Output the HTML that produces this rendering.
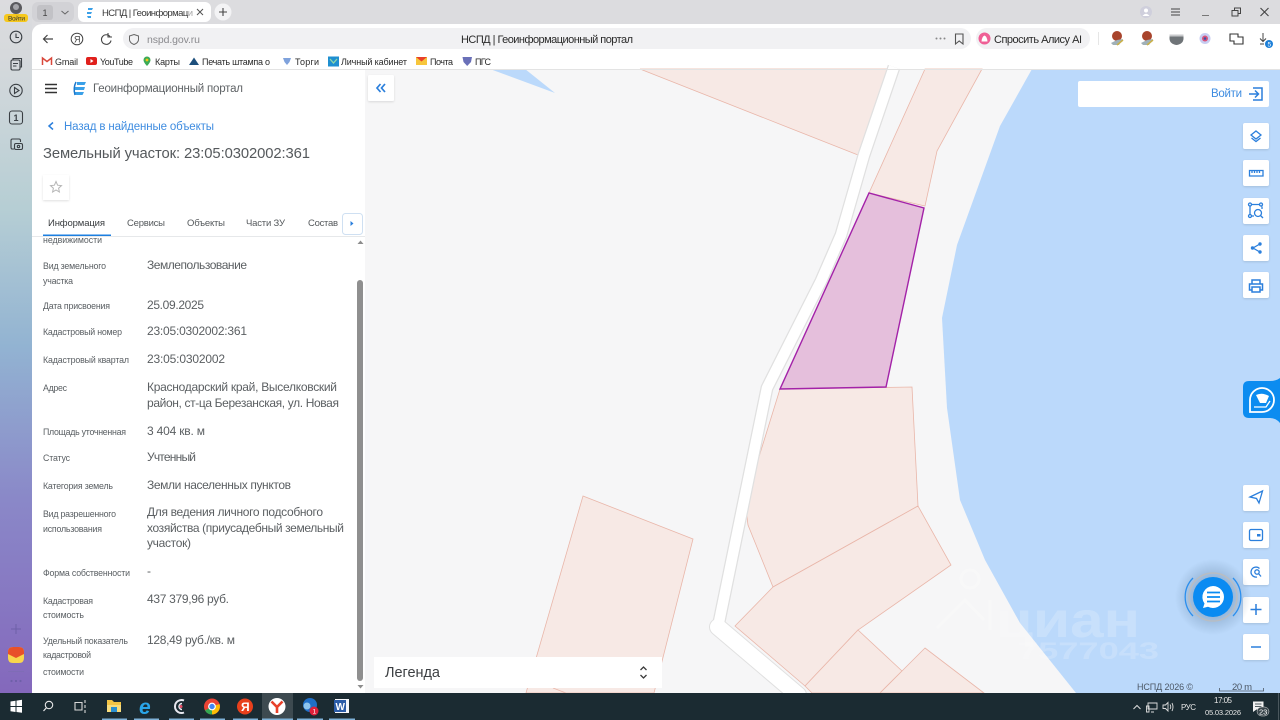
<!DOCTYPE html>
<html lang="ru">
<head>
<meta charset="utf-8">
<title>НСПД | Геоинформационный портал</title>
<style>
html,body{margin:0;padding:0;width:1280px;height:720px;overflow:hidden;background:#fff}
svg{display:block;font-family:"Liberation Sans",sans-serif}
.l{font-size:8.800px;fill:#5a5f63}
.v{font-size:12px;fill:#5b5f62}
.t{font-size:9.500px;fill:#55595c}
.bm{font-size:9px;fill:#2a2a2a}
.p{fill:#f7e9e5;stroke:#e9b6a9;stroke-width:.8}
.ic{fill:none;stroke:#2b7fdc;stroke-width:1.3}
.si{fill:none;stroke:#3a3f44;stroke-width:1.1}
</style>
</head>
<body>
<svg width="1280" height="720" viewBox="0 0 1280 720" xmlns="http://www.w3.org/2000/svg">
<defs>
<linearGradient id="side" x1="0" y1="0" x2="0" y2="1">
<stop offset="0" stop-color="#dcdcdf"/><stop offset=".08" stop-color="#d6d9dc"/><stop offset=".3" stop-color="#b6ced4"/><stop offset=".5" stop-color="#92b3d2"/><stop offset=".72" stop-color="#8a88c8"/><stop offset="1" stop-color="#8468bc"/>
</linearGradient>
<filter id="sh" x="-20%" y="-20%" width="140%" height="140%"><feDropShadow dx="0" dy="1" stdDeviation="1" flood-color="#000" flood-opacity=".12"/></filter>
<radialGradient id="glow"><stop offset=".45" stop-color="#4a6a8a" stop-opacity=".35"/><stop offset="1" stop-color="#4a6a8a" stop-opacity="0"/></radialGradient>
</defs>

<!-- window chrome -->
<rect width="1280" height="720" fill="#dcdcdf"/>
<rect x="0" y="0" width="32" height="693" fill="url(#side)"/>
<path d="M32 34a10 10 0 0 1 10-10H1280V70H32Z" fill="#fff"/>

<!-- map -->
<rect x="365" y="69" width="915" height="624" fill="#f6f6f7"/>
<path d="M1032 69L1000 126L957 245L942 318L947 408L960 500L985 560L1020 623L1076 693H1280V69Z" fill="#bbd9fb"/>
<path d="M490 69L555 93L525 69Z" fill="#bbd9fb"/>
<polygon class="p" points="640,69 858,155 889,69"/>
<polygon class="p" points="925,69 982,69 937,151 925,206 869,193"/>
<polygon class="p" points="780,389 912,387 918,506 773,587 748,525 745,502"/>
<g fill="none" stroke-linejoin="round">
<path d="M894 67L864 155L841 235L821 281L767 388L718 627" stroke="#e0e0e0" stroke-width="13"/>
<path d="M718 627L798 695" stroke="#e0e0e0" stroke-width="18" stroke-linecap="round"/>
<path d="M894 67L864 155L841 235L821 281L767 388L718 627" stroke="#fff" stroke-width="10.500"/>
<path d="M718 627L798 695" stroke="#fff" stroke-width="16" stroke-linecap="round"/>
</g>
<polygon class="p" points="773,587 918,506 951,565 858,630 805,686 735,626"/>
<polygon class="p" points="858,630 902,671 880,693 812,693 805,686"/>
<polygon class="p" points="925,648 984,693 880,693 902,671"/>
<polygon class="p" points="583,496 693,539 654,693 526,693"/>
<path d="M553 688L566 693" stroke="#e9b6a9" stroke-width=".8" fill="none"/>
<polygon points="780,389 869,193 924,208 886,387" fill="#e5bfdc" stroke="#a322a8" stroke-width="1.400"/>

<!-- watermark -->
<g opacity=".22" fill="none" stroke="#fff" stroke-width="3">
<circle cx="970" cy="579" r="9"/>
<path d="M937 628L965 600L984 620M990 630V600"/>
</g>
<text x="996" y="637" font-size="50" font-weight="bold" fill="#fff" opacity=".2" textLength="144" lengthAdjust="spacingAndGlyphs">циан</text>
<text x="1018" y="659" font-size="24" font-weight="bold" fill="#fff" opacity=".18" textLength="141" lengthAdjust="spacingAndGlyphs">7577043</text>

<!-- left panel -->
<rect x="32" y="69" width="333" height="624" fill="#fff"/>
<line x1="32" y1="69.500" x2="1280" y2="69.500" stroke="#e3e3e3"/>

<path d="M45 84.500H57M45 88.500H57M45 92.500H57" stroke="#333" stroke-width="1.400"/>
<path d="M77 82H86L84.500 85H77ZM75 87H85L84 90H75ZM75 92H84L82.500 95H77Q74 95 74 92Z" fill="#3aa0e8"/>
<path d="M76 82Q73 88 75 95" stroke="#1c78cc" stroke-width="1.500" fill="none"/>
<text x="93" y="92" font-size="11.500" fill="#5f6366" textLength="150">Геоинформационный портал</text>

<path d="M53 122.500L49 126L53 129.500" fill="none" stroke="#2b7fdc" stroke-width="1.500"/>
<text x="64" y="130" font-size="11.500" fill="#3e8ce0" textLength="150">Назад в найденные объекты</text>
<text x="43" y="158" font-size="14.800" fill="#55595c" textLength="267">Земельный участок: 23:05:0302002:361</text>

<rect x="43" y="175" width="26" height="25" fill="#fff" filter="url(#sh)"/>
<path d="M56 181.500L57.600 185.200L61.500 185.600L58.600 188.200L59.400 192L56 190L52.600 192L53.400 188.200L50.500 185.600L54.400 185.200Z" fill="none" stroke="#b5b5b5"/>

<text x="48" y="226" class="t" style="fill:#3a3d40" textLength="57">Информация</text>
<text x="127" y="226" class="t" textLength="38">Сервисы</text>
<text x="187" y="226" class="t" textLength="38">Объекты</text>
<text x="246" y="226" class="t" textLength="39">Части ЗУ</text>
<text x="308" y="226" class="t" textLength="30">Состав</text>
<rect x="32" y="236" width="333" height="1" fill="#e6e8ea"/>
<rect x="43" y="234.500" width="68" height="1.500" fill="#1c7fe0"/>
<rect x="342.500" y="213.500" width="20" height="21" rx="3" fill="#fff" stroke="#cfe0f2"/>
<path d="M350.500 221L353.500 223.500L350.500 226Z" fill="#2b7fdc"/>

<g class="labels">
<text x="43" y="243" class="l" textLength="59">недвижимости</text>
<text x="43" y="269" class="l" textLength="63">Вид земельного</text>
<text x="43" y="284" class="l" textLength="30">участка</text>
<text x="43" y="309" class="l" textLength="67">Дата присвоения</text>
<text x="43" y="335" class="l" textLength="79">Кадастровый номер</text>
<text x="43" y="363" class="l" textLength="86">Кадастровый квартал</text>
<text x="43" y="391" class="l" textLength="24">Адрес</text>
<text x="43" y="435" class="l" textLength="83">Площадь уточненная</text>
<text x="43" y="461" class="l" textLength="27">Статус</text>
<text x="43" y="489" class="l" textLength="70">Категория земель</text>
<text x="43" y="517" class="l" textLength="73">Вид разрешенного</text>
<text x="43" y="532" class="l" textLength="59">использования</text>
<text x="43" y="576" class="l" textLength="87">Форма собственности</text>
<text x="43" y="604" class="l" textLength="50">Кадастровая</text>
<text x="43" y="618" class="l" textLength="41">стоимость</text>
<text x="43" y="644" class="l" textLength="85">Удельный показатель</text>
<text x="43" y="658" class="l" textLength="48">кадастровой</text>
<text x="43" y="675" class="l" textLength="41">стоимости</text>
</g>
<g class="values">
<text x="147" y="269" class="v" textLength="100">Землепользование</text>
<text x="147" y="309" class="v" textLength="57">25.09.2025</text>
<text x="147" y="335" class="v" textLength="100">23:05:0302002:361</text>
<text x="147" y="363" class="v" textLength="78">23:05:0302002</text>
<text x="147" y="391" class="v" textLength="190">Краснодарский край, Выселковский</text>
<text x="147" y="407" class="v" textLength="192">район, ст-ца Березанская, ул. Новая</text>
<text x="147" y="435" class="v" textLength="58">3 404 кв. м</text>
<text x="147" y="461" class="v" textLength="49">Учтенный</text>
<text x="147" y="489" class="v" textLength="144">Земли населенных пунктов</text>
<text x="147" y="516" class="v" textLength="176">Для ведения личного подсобного</text>
<text x="147" y="532" class="v" textLength="197">хозяйства (приусадебный земельный</text>
<text x="147" y="547" class="v" textLength="44">участок)</text>
<text x="147" y="575" class="v">-</text>
<text x="147" y="603" class="v" textLength="82">437 379,96 руб.</text>
<text x="147" y="644" class="v" textLength="88">128,49 руб./кв. м</text>
</g>
<!-- scrollbar -->
<path d="M357.500 244L360.500 240.500L363.500 244Z" fill="#8d8d8d"/>
<rect x="357" y="280" width="6" height="401" rx="3" fill="#8f8f8f"/>
<path d="M357.500 685L360.500 688.500L363.500 685Z" fill="#8d8d8d"/>

<!-- map overlays -->
<rect x="368" y="75" width="26" height="26" rx="1.500" fill="#fff" filter="url(#sh)"/>
<path d="M380.500 84L377 88L380.500 92M385 84L381.500 88L385 92" fill="none" stroke="#2b7fdc" stroke-width="1.700"/>

<rect x="1078" y="81" width="191" height="26" rx="2" fill="#fff"/>
<text x="1211" y="97" font-size="11.500" fill="#3e8ce0" textLength="31">Войти</text>
<path d="M1249 94H1258M1255 90.500L1258.500 94L1255 97.500M1253 88H1262V100H1253" fill="none" stroke="#2b7fdc" stroke-width="1.500"/>

<g fill="#fff" filter="url(#sh)">
<rect x="1243" y="123" width="26" height="26" rx="2"/>
<rect x="1243" y="160" width="26" height="26" rx="2"/>
<rect x="1243" y="198" width="26" height="26" rx="2"/>
<rect x="1243" y="235" width="26" height="26" rx="2"/>
<rect x="1243" y="272" width="26" height="26" rx="2"/>
<rect x="1243" y="485" width="26" height="26" rx="2"/>
<rect x="1243" y="522" width="26" height="26" rx="2"/>
<rect x="1243" y="559" width="26" height="26" rx="2"/>
<rect x="1243" y="597" width="26" height="26" rx="2"/>
<rect x="1243" y="634" width="26" height="26" rx="2"/>
</g>
<path d="M1256 131L1261 135L1256 139L1251 135Z M1251.500 138L1256 141.500L1260.500 138" class="ic"/>
<path d="M1249.500 170.500H1263V176H1249.500Z M1252 170.500V173M1254.500 170.500V173M1257 170.500V173M1259.500 170.500V173" class="ic"/>
<g class="ic">
<path d="M1252 204.500H1259M1250 206.500V214M1262 206.500V209M1252 216H1254"/>
<circle cx="1250" cy="204.500" r="1.500"/><circle cx="1261" cy="204.500" r="1.500"/><circle cx="1250" cy="216" r="1.500"/>
<circle cx="1258" cy="213" r="3.500"/><path d="M1260.500 215.500L1263 218"/>
</g>
<g class="ic">
<path d="M1259 244.500L1253 248L1259 251.500"/>
</g>
<g fill="#2b7fdc"><circle cx="1260" cy="244" r="1.700"/><circle cx="1252.500" cy="248" r="1.700"/><circle cx="1260" cy="252" r="1.700"/></g>
<g fill="none" stroke="#2b7fdc" stroke-width="1.500">
<path d="M1252 284V280H1260V284M1252 290H1249.500V284H1262.500V290H1260"/>
<rect x="1252" y="287" width="8" height="5"/>
</g>

<path d="M1250 497L1262.500 491L1259 503L1256.500 498.500Z" class="ic"/>
<rect x="1249.500" y="529.500" width="13" height="11" rx="1.500" class="ic"/>
<rect x="1257" y="534" width="3.500" height="2.500" fill="#2b7fdc"/>
<g class="ic">
<path d="M1259.500 568.500A5 5 0 1 0 1257 577"/>
<circle cx="1257" cy="572" r="2.200"/><path d="M1258.500 573.500L1261 576.500"/>
</g>
<path d="M1256 604V615M1250.500 609.500H1261.500" stroke="#2b7fdc" stroke-width="1.500"/>
<path d="M1251 647H1261" stroke="#2b7fdc" stroke-width="1.500"/>

<!-- NSPD tab -->
<path d="M1280 378Q1276 381 1270 381H1249Q1243 381 1243 387V412Q1243 418 1249 418H1270Q1276 418 1280 423Z" fill="#0c8cf0"/>
<path d="M1250 412V400A12 12 0 1 1 1262 412Z" fill="none" stroke="#fff" stroke-width="1.800"/>
<path d="M1256 395Q1262 392 1269 396L1266 403H1260Z" fill="#fff"/>
<path d="M1254 407H1266L1270 401" fill="none" stroke="#fff" stroke-width="1.300"/>

<!-- chat -->
<circle cx="1213" cy="597" r="38" fill="url(#glow)"/>
<circle cx="1213" cy="597" r="24" fill="none" stroke="#b9bdc2" stroke-width="1.500"/>
<path d="M1193 578A27 27 0 0 0 1193 616M1233 578A27 27 0 0 1 1233 616" fill="none" stroke="#2b8fee" stroke-width="1.300"/>
<circle cx="1213" cy="597" r="20" fill="#0a8bf2"/>
<path d="M1213 586a11 11 0 1 1 -5 20.800l-5 1.200 1.500-4.500a11 11 0 0 1 8.500-17.500Z" fill="#fff"/>
<path d="M1207 592.500H1220M1207 597H1220M1207 601.500H1220" stroke="#0a8bf2" stroke-width="1.700"/>

<!-- legend -->
<rect x="374" y="657" width="288" height="31" fill="#fff"/>
<text x="385" y="677" font-size="14.500" fill="#3c3f42" textLength="55">Легенда</text>
<path d="M640.500 670L643.500 667L646.500 670M640.500 675L643.500 678L646.500 675" fill="none" stroke="#3a3a3a" stroke-width="1.300"/>

<text x="1137" y="690" font-size="9" fill="#4c5866" textLength="56">НСПД 2026 ©</text>
<text x="1232" y="690" font-size="9.500" fill="#4c5866" textLength="20">20 m</text>
<path d="M1219.500 688V691H1263.500V688" fill="none" stroke="#4c5866" stroke-width=".8"/>

<!-- tab strip -->
<rect x="32" y="2" width="42" height="20" rx="6" fill="#d2d2d6"/>
<rect x="37" y="5" width="16" height="15" rx="3" fill="#c2c2c6"/>
<text x="42.500" y="16" font-size="9" fill="#444">1</text>
<path d="M61.500 11L65 14L68.500 11" fill="none" stroke="#666" stroke-width="1"/>
<rect x="78" y="2" width="133" height="20" rx="6" fill="#fff"/>
<path d="M88 8H93L92 10H88ZM87 12H92L91 14H87ZM87 16H91V18H88Z" fill="#3aa0e8"/>
<text x="102" y="16" font-size="9.500" fill="#3a3a3a" textLength="91">НСПД | Геоинформаци</text>
<rect x="188" y="4" width="8" height="16" fill="#fff" opacity=".55"/>
<path d="M197 9L203 15M203 9L197 15" stroke="#555" stroke-width="1"/>
<circle cx="223" cy="12" r="8.500" fill="#f3f3f5"/>
<path d="M223 8V16M219 12H227" stroke="#444" stroke-width="1.100"/>
<circle cx="1146" cy="12" r="6" fill="#cfcfdc"/>
<circle cx="1146" cy="10.500" r="2" fill="#fff"/><path d="M1142.500 16Q1146 11.500 1149.500 16Z" fill="#fff"/>
<path d="M1171 9H1180M1171 12H1180M1171 15H1180" stroke="#444" stroke-width="1"/>
<path d="M1202 15.500H1209" stroke="#777" stroke-width="1"/>
<path d="M1232 10.500H1238V16H1232ZM1234.500 10V8H1240.500V13.500H1238" fill="none" stroke="#444" stroke-width="1"/>
<path d="M1260.500 8L1268.500 16M1268.500 8L1260.500 16" stroke="#444" stroke-width="1.100"/>

<!-- left rail -->
<circle cx="16" cy="8" r="6" fill="#5a5a5e"/>
<circle cx="16" cy="7" r="3" fill="#a5a5aa"/>
<rect x="4" y="14" width="24" height="8" rx="3" fill="#f6c81d"/>
<text x="8" y="20.500" font-size="6.500" fill="#333" textLength="17">Войти</text>
<g class="si">
<circle cx="16" cy="37" r="5.800"/><path d="M16 33.500V37.500H19"/>
<rect x="11" y="60" width="9" height="10" rx="1.500"/><path d="M13 60V58.500H21.500V67H20M13 63.500H18M13 66H16.500"/>
<circle cx="16" cy="90.500" r="6.200"/><path d="M14.500 87.500L19 90.500L14.500 93.500Z"/>
<rect x="9.500" y="111" width="13" height="13" rx="2.500"/>
<path d="M11 147V140.500Q11 139 12.500 139H19Q20.500 139 20.500 140.500V142M14 149H12Q11 149 11 147"/>
<rect x="14.500" y="143.500" width="8" height="6" rx="1.500"/><circle cx="18.500" cy="146.500" r="1.200"/>
</g>
<text x="13.500" y="121" font-size="9" font-weight="bold" fill="#3a3f44">1</text>
<path d="M16 624V634M11 629H21" stroke="#6e60a8" stroke-width="1"/>
<path d="M8 652Q8 647 13 647H19Q24 647 24 652V658Q24 663 19 663H13Q8 663 8 658Z" fill="#f8d64e"/>
<path d="M8 652Q8 647 13 647H19Q24 647 24 652V654L16 658L8 654Z" fill="#e8502a"/>
<rect x="8" y="671" width="16" height=".8" fill="#7e6cb4"/>
<g fill="#6e60a8"><circle cx="11.500" cy="681" r="1.100"/><circle cx="16" cy="681" r="1.100"/><circle cx="20.500" cy="681" r="1.100"/></g>

<!-- toolbar -->
<path d="M53 39H43.500M47.500 35L43.500 39L47.500 43" fill="none" stroke="#444" stroke-width="1.200"/>
<circle cx="77" cy="39" r="5.800" fill="none" stroke="#444" stroke-width="1"/>
<text x="74" y="42.500" font-size="9" fill="#444">Я</text>
<path d="M110 36.500A4.800 4.800 0 1 0 111 40.500M108 33V37H112" fill="none" stroke="#444" stroke-width="1.100"/>
<rect x="123" y="28" width="848" height="21" rx="10.500" fill="#f1f1f3"/>
<path d="M134 34.500L138.500 36V40Q138 43 134 44.500Q130 43 129.500 40V36Z" fill="none" stroke="#666" stroke-width="1"/>
<text x="147" y="43" font-size="10.500" fill="#8a8a8e" textLength="53">nspd.gov.ru</text>
<text x="461" y="43" font-size="11" fill="#2a2a2a" textLength="172">НСПД | Геоинформационный портал</text>
<g fill="#888"><circle cx="936.500" cy="38.500" r="1"/><circle cx="940.500" cy="38.500" r="1"/><circle cx="944.500" cy="38.500" r="1"/></g>
<path d="M955.500 34H963V44L959.200 41L955.500 44Z" fill="none" stroke="#555" stroke-width="1.100"/>
<rect x="976" y="28" width="114" height="21" rx="10.500" fill="#f1f1f3"/>
<circle cx="984.500" cy="38.500" r="6" fill="#ef5f95"/>
<path d="M981.500 41.500Q982 36.500 984.500 35.500Q987 36.500 987.500 41.500Z" fill="#fff"/>
<text x="994" y="43" font-size="11" fill="#2a2a2a" textLength="88">Спросить Алису AI</text>
<rect x="1098" y="32" width="1" height="13" fill="#e6e6e6"/>
<g>
<circle cx="1117" cy="36" r="5" fill="#a8442c"/><path d="M1111 43L1117 40L1123 39L1119 45L1113 45Z" fill="#9fb0b8"/><path d="M1117 45L1123 40" stroke="#c9b14a" stroke-width="1.500"/>
<circle cx="1147" cy="36" r="5" fill="#a8442c"/><path d="M1141 43L1147 40L1153 39L1149 45L1143 45Z" fill="#9fb0b8"/><path d="M1147 45L1153 40" stroke="#c9b14a" stroke-width="1.500"/>
<path d="M1169.500 36H1183.500V39Q1183 44 1176.500 45Q1170 44 1169.500 39Z" fill="#6f7478"/>
<rect x="1169.500" y="34.500" width="14" height="2" fill="#c8cacc"/>
<circle cx="1205" cy="38.500" r="5.500" fill="#c7cdf2"/><circle cx="1205" cy="38.500" r="3" fill="#d8527a"/><circle cx="1205" cy="38.500" r="1.300" fill="#3a55a8"/>
<path d="M1230 34H1238V37H1243V44H1234V41H1230Z" fill="none" stroke="#333" stroke-width="1.100"/>
<path d="M1263 33V41M1260 38.500L1263 41.500L1266 38.500M1260 44H1264" fill="none" stroke="#444" stroke-width="1"/>
<circle cx="1269" cy="44" r="4" fill="#1c7fd8"/><text x="1267.500" y="46.500" font-size="6.500" fill="#fff">5</text>
</g>

<!-- bookmarks -->
<path d="M42.500 65V58L47 61.500L51.500 58V65" fill="none" stroke="#d9483b" stroke-width="1.500"/>
<text x="55" y="65" class="bm" textLength="23">Gmail</text>
<rect x="86" y="57" width="11" height="8" rx="2" fill="#e0201c"/><path d="M90.500 59L93.500 61L90.500 63Z" fill="#fff"/>
<text x="100" y="65" class="bm" textLength="33">YouTube</text>
<path d="M147 56.500a3.500 3.500 0 0 1 3.500 3.500c0 2.500-3.500 6-3.500 6s-3.500-3.500-3.500-6a3.500 3.500 0 0 1 3.500-3.500Z" fill="#3cab56"/><circle cx="147" cy="60" r="1.400" fill="#f5c518"/>
<text x="155" y="65" class="bm" textLength="25">Карты</text>
<path d="M189 65L194 57.500L199 65Z" fill="#1d4f7c"/>
<text x="202" y="65" class="bm" textLength="68">Печать штампа о</text>
<path d="M283 58H291L289.500 62L287 65L284.500 62Z" fill="#7fa2dc"/>
<text x="295" y="65" class="bm" textLength="24">Торги</text>
<rect x="328" y="56.500" width="11" height="10" fill="#1f8fd0"/><path d="M330 59L333.500 63L337 59" stroke="#8fd8a8" stroke-width="1.300" fill="none"/>
<text x="341" y="65" class="bm" textLength="66">Личный кабинет</text>
<rect x="416" y="57" width="11" height="8" fill="#f7c63c"/><path d="M416 57H427L421.500 61.500Z" fill="#e8402a"/>
<text x="430" y="65" class="bm" textLength="23">Почта</text>
<path d="M462.500 57H472L471 62L467.200 66L463.500 62Z" fill="#6a70b8"/>
<text x="475" y="65" class="bm" textLength="16">ПГС</text>

<!-- taskbar -->
<rect x="0" y="693" width="1280" height="27" fill="#1b2b32"/>
<path d="M10.500 701.500L15.500 700.800V706H10.500ZM16.500 700.600L22 699.800V706H16.500ZM10.500 707H15.500V712L10.500 711.300ZM16.500 707H22V712.800L16.500 712Z" fill="#fff"/>
<circle cx="49" cy="705" r="3.700" fill="none" stroke="#e8e8e8" stroke-width="1.100"/><path d="M46.200 708L43.500 711" stroke="#e8e8e8" stroke-width="1.200"/>
<path d="M75 702.500H82V710H75ZM85 700V703M85 705V708M85 710V713" fill="none" stroke="#d8d8d8" stroke-width="1.100"/>
<path d="M107 700H112L114 702H121V712H107Z" fill="#f3c445"/><rect x="107" y="705" width="14" height="7" fill="#f8dc7c"/><rect x="111" y="707" width="6" height="5" fill="#2a8fd0"/>
<text x="139" y="714" font-size="21" font-style="italic" font-weight="bold" fill="#2aa5e8">e</text>
<path d="M184 700.500A6.500 6.500 0 1 0 184 712.500" fill="none" stroke="#e8e8f0" stroke-width="2"/>
<path d="M182 703.500A3 3 0 1 0 182 709.500" fill="none" stroke="#e8e8f0" stroke-width="1.500"/><circle cx="181" cy="706.500" r="1.500" fill="#e8506a"/>
<circle cx="212" cy="706.500" r="8" fill="#ea4335"/><path d="M212 706.500L205 710.500A8 8 0 0 0 212 714.500Z" fill="#34a853"/><path d="M212 706.500L212 714.500A8 8 0 0 0 219.500 704Z" fill="#fbbc05"/><circle cx="212" cy="706.500" r="3.300" fill="#4285f4" stroke="#fff" stroke-width="1.200"/>
<circle cx="245" cy="706.500" r="8" fill="#e8401c"/><text x="241" y="711" font-size="12" font-weight="bold" fill="#fff">Я</text>
<rect x="262" y="693" width="31" height="27" fill="#3d4a50"/>
<circle cx="277" cy="706.500" r="8.500" fill="#fff"/><path d="M271.500 701.500L277 707L282.500 701.500M277 707V713" fill="none" stroke="#e8402a" stroke-width="2.600"/>
<circle cx="310" cy="705" r="7" fill="#1f6fc8"/><circle cx="307" cy="706" r="3.500" fill="#8ec5ee"/><circle cx="314" cy="711" r="4.500" fill="#e0203a"/><text x="312.500" y="713.500" font-size="6.500" fill="#fff">1</text>
<rect x="335" y="699" width="14" height="14" fill="#f4f6fa"/><rect x="334" y="700" width="12" height="12" fill="#2b5ca8"/><text x="335.500" y="710" font-size="10" font-weight="bold" fill="#fff">W</text>
<g fill="#7fb2d8">
<rect x="102" y="718.500" width="25" height="1.500"/><rect x="134" y="718.500" width="25" height="1.500"/><rect x="169" y="718.500" width="25" height="1.500"/><rect x="200" y="718.500" width="25" height="1.500"/><rect x="233" y="718.500" width="25" height="1.500"/><rect x="262" y="718.500" width="31" height="1.500"/><rect x="297" y="718.500" width="26" height="1.500"/><rect x="329" y="718.500" width="26" height="1.500"/>
</g>
<!-- tray -->
<path d="M1133.500 709L1137 705.500L1140.500 709" fill="none" stroke="#ddd" stroke-width="1"/>
<path d="M1148 703H1157V709H1148ZM1151 712H1154M1146.500 706H1149V712H1146.500Z" fill="none" stroke="#ddd" stroke-width=".9"/>
<path d="M1163 705H1165.500L1168 702.500V711L1165.500 708.500H1163ZM1170 704.500Q1171.500 707 1170 709M1172 703Q1174 707 1172 711" fill="none" stroke="#ddd" stroke-width=".9"/>
<text x="1181" y="710" font-size="8" fill="#e6e6e6" textLength="15">РУС</text>
<text x="1214" y="703" font-size="8" fill="#e6e6e6" textLength="18">17:05</text>
<text x="1205" y="715" font-size="7.500" fill="#e6e6e6" textLength="36">05.03.2026</text>
<path d="M1253 701.500H1263.500V709.500H1256.500L1253 712Z" fill="#f0f0f0"/>
<path d="M1255 704H1261.500M1255 706.500H1261.500" stroke="#1b2b32" stroke-width=".8"/>
<rect x="1257" y="707" width="12" height="9" rx="4.500" fill="#3a464c" stroke="#ddd" stroke-width=".5"/>
<text x="1259" y="714.500" font-size="7.500" fill="#fff">23</text>
<rect x="1278" y="693" width="1" height="27" fill="#4a575d"/>
</svg>
</body>
</html>
